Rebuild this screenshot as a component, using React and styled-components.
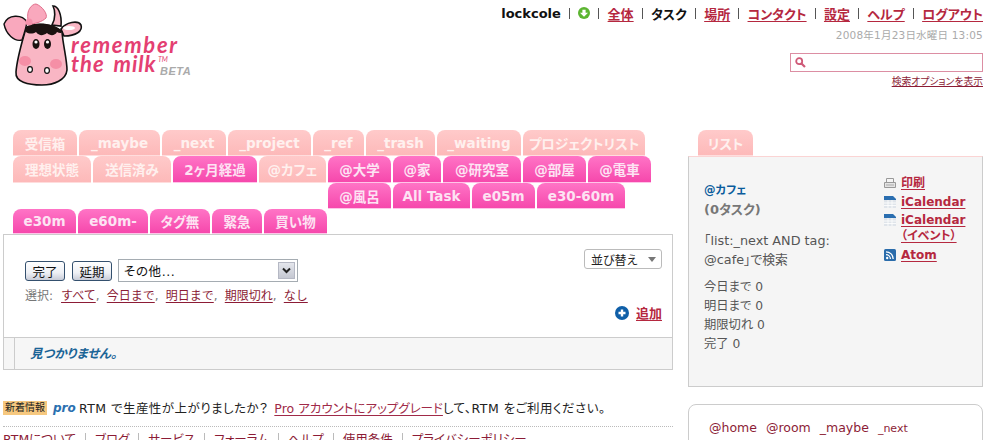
import React from 'react';
import styled, { createGlobalStyle } from 'styled-components';

const GlobalStyle = createGlobalStyle`
  html, body { margin: 0; padding: 0; background: #fff; overflow: hidden; }
  body {
    font-family: "DejaVu Sans", "Noto Sans CJK JP", sans-serif;
    font-feature-settings: "palt";
  }
`;

const Page = styled.div`
  width: 985px;
  height: 440px;
  overflow: hidden;
`;

const Header = styled.header`
  display: flex;
  justify-content: space-between;
  height: 130px;
`;

const RightHead = styled.div`
  display: flex;
  flex-direction: column;
  align-items: flex-end;
  padding: 5px 2px 0 0;
`;

const NavBar = styled.nav`
  display: flex;
  align-items: center;
  height: 16px;
  font-size: 13px;
  font-weight: bold;
  color: #111;
`;

const NavLink = styled.a`
  color: #b5283f;
  text-decoration: underline;
  text-underline-offset: 2px;
`;

const NavSep = styled.span`
  width: 1px;
  height: 11px;
  background: #555;
  margin: 0 8.2px;
`;

const DateText = styled.div`
  margin-top: 7px;
  font-size: 10.5px;
  line-height: 14px;
  color: #aaa;
  letter-spacing: 0.2px;
`;

const SearchBox = styled.div`
  display: flex;
  align-items: center;
  box-sizing: content-box;
  width: 187px;
  height: 17px;
  margin-top: 11px;
  padding-left: 4px;
  border: 1px solid #dc8ea3;
`;

const SearchOption = styled.a`
  margin-top: 3px;
  font-size: 9.8px;
  line-height: 14px;
  color: #8c1c36;
  text-decoration: underline;
`;

const Columns = styled.div`
  display: flex;
  align-items: flex-start;
  padding-left: 3px;
`;

const MainColumn = styled.main`
  width: 670px;
`;

const TabRow = styled.div`
  display: flex;
  gap: 2px;
  height: ${(p) => p.$h || 26}px;
  padding-left: ${(p) => p.$indent || 10}px;
`;

const Tab = styled.div`
  display: flex;
  align-items: center;
  justify-content: center;
  box-sizing: border-box;
  width: ${(p) => p.$w}px;
  height: 100%;
  font-size: 13.5px;
  font-weight: bold;
  white-space: nowrap;
  border-radius: 8px 8px 0 0;
  color: ${(p) => (p.$pink ? '#fde3f3' : '#fff0ee')};
  background: ${(p) =>
    p.$pink
      ? 'linear-gradient(#ff74c6, #f648ac)'
      : 'linear-gradient(#ffcaca, #fdb9b9)'};
  border-bottom: 1px solid ${(p) => (p.$pink ? '#ffc4e8' : '#fdd')};
`;

const Panel = styled.section`
  display: flex;
  flex-direction: column;
  height: 134px;
  border: 1px solid #ccc;
`;

const PanelTop = styled.div`
  display: flex;
  flex: 1;
  justify-content: space-between;
  padding: 14px 10px 0 21px;
`;

const Controls = styled.div`
  padding-top: 10px;
`;

const ControlRow = styled.div`
  display: flex;
  align-items: center;
  gap: 6px;
`;

const ActionButton = styled.button`
  box-sizing: border-box;
  width: 40px;
  height: 20px;
  margin-right: ${(p) => p.$gap || 0}px;
  padding: 0;
  font: 12.5px "Noto Sans CJK JP", sans-serif;
  color: #111;
  border: 1px solid #34506e;
  border-radius: 3px;
  background: linear-gradient(#fff, #eef0f5 60%, #c8ccd8);
`;

const SelectBox = styled.div`
  display: flex;
  align-items: center;
  justify-content: space-between;
  box-sizing: border-box;
  width: 180px;
  height: 23px;
  padding: 0 2px 0 5px;
  font-size: 12.5px;
  letter-spacing: 0.6px;
  color: #111;
  border: 1px solid #a5acb2;
`;

const SelectArrow = styled.span`
  display: flex;
  align-items: center;
  justify-content: center;
  width: 17px;
  height: 17px;
  background: linear-gradient(#e4e6ec, #c5c8d2);
  border: 1px solid #b5b8c4;
  box-sizing: border-box;
`;

const SelectRow = styled.div`
  display: flex;
  margin-top: 6px;
  font-size: 12px;
  line-height: 17px;
  font-feature-settings: normal;
  color: #777;
`;

const RowLink = styled.a`
  margin-left: ${(p) => (p.$first ? '8px' : '0')};
  color: #8c1c36;
  text-decoration: underline;
  text-underline-offset: 2px;
`;

const Comma = styled.span`
  margin-right: 7px;
  width: 4px;
`;

const PanelSide = styled.div`
  display: flex;
  flex-direction: column;
  align-items: flex-end;
`;

const SortButton = styled.div`
  display: flex;
  align-items: center;
  justify-content: space-between;
  box-sizing: border-box;
  width: 78px;
  height: 20px;
  padding: 0 5px 0 6px;
  font-size: 12px;
  color: #222;
  border: 1px solid #bbb;
  border-radius: 3px;
`;

const SortArrow = styled.span`
  width: 0;
  height: 0;
  border-left: 4.5px solid transparent;
  border-right: 4.5px solid transparent;
  border-top: 5px solid #777;
`;

const AddLink = styled.div`
  display: flex;
  align-items: center;
  gap: 7px;
  margin-top: 34px;
  font-size: 13px;
  font-weight: bold;
`;

const NotFound = styled.div`
  height: 31px;
  border-top: 1px solid #ccc;
  background: #f6f6f6;
  padding-left: 10px;
`;

const NotFoundInner = styled.div`
  height: 100%;
  padding-left: 15px;
  border-left: 1px solid #ccc;
  font-size: 12.5px;
  line-height: 31px;
  font-weight: bold;
  font-style: italic;
  color: #1a6496;
`;

const NewsRow = styled.div`
  display: flex;
  align-items: center;
  box-sizing: border-box;
  height: 30px;
  margin-top: 27px;
  padding-bottom: 8px;
  font-size: 12.5px;
  letter-spacing: 0.45px;
  color: #222;
  border-bottom: 1px dotted #bbb;
`;

const NewsBadge = styled.span`
  width: 44px;
  height: 14px;
  font-size: 10px;
  line-height: 14px;
  letter-spacing: 0;
  text-align: center;
  color: #222;
  background: #f6c87f;
`;

const ProMark = styled.span`
  width: 20px;
  margin: 0 6px;
  font-size: 12px;
  font-weight: bold;
  font-style: italic;
  letter-spacing: 0;
  color: #2a70b0;
`;

const NewsLink = styled.a`
  color: #a02a48;
  letter-spacing: 0;
  text-decoration: underline;
  text-underline-offset: 2px;
  margin-left: 6px;
`;

const FootLinks = styled.div`
  display: flex;
  align-items: center;
  height: 16px;
  margin-top: 3px;
  font-size: 12.5px;
  white-space: nowrap;
  color: #8c1c36;
`;

const FootSep = styled.span`
  width: 1px;
  height: 11px;
  margin: 0 9px;
  background: #bbb;
`;

const Sidebar = styled.aside`
  width: 295px;
  margin-left: 15px;
`;

const SideTabRow = styled.div`
  display: flex;
  height: 26px;
  padding-left: 10px;
`;

const SideBox = styled.section`
  display: flex;
  justify-content: space-between;
  box-sizing: border-box;
  height: 231px;
  padding: 25px 17px 0 15px;
  background: #f5f5f5;
  border: 1px solid #ccc;
  border-top-color: #fbd4d4;
`;

const ListName = styled.div`
  font-size: 11.5px;
  line-height: 16px;
  font-weight: bold;
  color: #0a5c9c;
`;

const TaskCount = styled.div`
  margin-top: 4px;
  font-size: 13px;
  line-height: 16px;
  font-weight: bold;
  color: #777;
`;

const Query = styled.div`
  margin-top: 13px;
  font-size: 12.8px;
  line-height: 19px;
  color: #555;
`;

const Stats = styled.div`
  margin-top: 9px;
  font-size: 12.3px;
  line-height: 19px;
  color: #555;
`;

const SideLinks = styled.ul`
  list-style: none;
  margin: -7px 0 0;
  padding: 0;
  width: 81px;
`;

const SideLinkItem = styled.li`
  display: flex;
  gap: 5px;
  margin-bottom: 2.5px;
  font-size: 12px;
  line-height: 16px;
  font-weight: bold;
`;

const IconCell = styled.span`
  display: flex;
  align-items: center;
  flex: none;
  width: 12px;
  height: 16px;
`;

const SideLink = styled.a`
  color: #b5283f;
  text-decoration: underline;
  text-underline-offset: 2px;
`;

const TagBox = styled.section`
  display: flex;
  gap: 9px;
  align-items: baseline;
  box-sizing: border-box;
  height: 80px;
  margin-top: 17px;
  padding: 15px 20px;
  font-size: 12.5px;
  color: #8c1c36;
  border: 1px solid #ccc;
  border-radius: 8px;
`;

const SmallTag = styled.span`
  font-size: 11px;
`;

const paleRow = [
  ['受信箱', 64], ['_maybe', 81], ['_next', 64], ['_project', 83], ['_ref', 51], ['_trash', 69], ['_waiting', 84], ['プロジェクトリスト', 122],
];
const row2 = [
  ['理想状態', 78], ['送信済み', 78], ['2ヶ月経過', 84, true], ['@カフェ', 67], ['@大学', 63, true], ['@家', 48, true], ['@研究室', 78, true], ['@部屋', 63, true], ['@電車', 63, true],
];
const row3 = [['@風呂', 63], ['All Task', 77], ['e05m', 63], ['e30-60m', 88]];
const row4 = [['e30m', 63], ['e60m-', 70], ['タグ無', 60], ['緊急', 50], ['買い物', 63]];
const navItems = ['全体', 'タスク', '場所', 'コンタクト', '設定', 'ヘルプ', 'ログアウト'];
const footItems = ['RTMについて', 'ブログ', 'サービス', 'フォーラム', 'ヘルプ', '使用条件', 'プライバシーポリシー'];

function Logo() {
  return (
    <svg width="200" height="92" viewBox="0 0 200 92">
      {/* horn and ear */}
      <path d="M52 25 C56 18 55 10 53 6 C58 6 62 14 61 26Z" fill="#f9b6c4" stroke="#111" strokeWidth="1.6" />
      <path d="M61 29 C66 22 78 20 81 25 C83 31 76 36 64 36Z" fill="#f9b6c4" stroke="#111" strokeWidth="1.6" />
      <ellipse cx="69" cy="28" rx="6" ry="2" fill="#fff" />
      {/* head */}
      <path d="M26 28 C36 22 54 24 62 32 C63 45 67 60 67 70 C66 80 54 85 42 85 C28 85 15 82 16 72 C17 58 22 42 26 28Z" fill="#f9b6c4" stroke="#111" strokeWidth="1.6" />
      <path d="M25 27 C36 21 54 23 62 31 C62 34 59 33 57 32 C55 36 50 36 47 33 C43 36 39 36 36 32 C33 34 29 34 26 32Z" fill="#1a1210" />
      {/* cheeks */}
      <ellipse cx="25" cy="61" rx="6" ry="5" fill="#f58fa6" />
      <ellipse cx="56" cy="64" rx="6" ry="5" fill="#f58fa6" />
      {/* eyes */}
      <ellipse cx="36" cy="44" rx="3.5" ry="5" fill="#1a1210" />
      <ellipse cx="47.5" cy="44" rx="3.5" ry="5" fill="#1a1210" />
      <circle cx="36" cy="42" r="1.6" fill="#fff" />
      <circle cx="47.5" cy="42" r="1.6" fill="#fff" />
      {/* nostrils */}
      <ellipse cx="30" cy="69.5" rx="2.4" ry="2.8" fill="#fff" stroke="#111" strokeWidth="1.2" />
      <ellipse cx="47" cy="70.5" rx="2.4" ry="2.8" fill="#fff" stroke="#111" strokeWidth="1.2" />
      {/* bow */}
      <path d="M27 22 C22 14 8 14 4 24 C6 34 14 42 22 40 C24 34 26 28 27 22Z" fill="#f9a8bd" stroke="#111" strokeWidth="1.4" />
      <path d="M28 20 C26 10 32 4 36 4 C42 6 48 14 46 18 C42 22 34 24 30 24Z" fill="#f9a8bd" stroke="#e0708c" strokeWidth="1" />
      <circle cx="29" cy="22" r="3.5" fill="#f490aa" />
      {/* wordmark */}
      <text x="71" y="53" fill="#e43f72" fontFamily="Lato, sans-serif" fontSize="22" fontWeight="bold" fontStyle="italic" letterSpacing="1.7">remember</text>
      <text x="71" y="72" fill="#e43f72" fontFamily="Lato, sans-serif" fontSize="22" fontWeight="bold" fontStyle="italic" letterSpacing="1" wordSpacing="3">the milk</text>
      <text x="158" y="62" fill="#e43f72" fontFamily="Lato, sans-serif" fontSize="7" fontStyle="italic">TM</text>
      <text x="160" y="75" fill="#aaa" fontFamily="'Liberation Sans', sans-serif" fontSize="11" fontWeight="bold" fontStyle="italic" letterSpacing="0.5">BETA</text>
    </svg>
  );
}

const DownIcon = () => (
  <svg width="12" height="12" viewBox="0 0 12 12">
    <circle cx="6" cy="6" r="6" fill="#5cb531" />
    <path d="M4.4 2.8h3.2v3H10L6 9.8 2 5.8h2.4z" fill="#fff" />
  </svg>
);

const MagnifierIcon = () => (
  <svg width="11" height="11" viewBox="0 0 11 11">
    <circle cx="4.2" cy="4.2" r="3" fill="none" stroke="#cf5a78" strokeWidth="1.8" />
    <path d="M6.5 6.5 10 10" stroke="#cf5a78" strokeWidth="2.2" />
  </svg>
);

const PlusIcon = () => (
  <svg width="14" height="14" viewBox="0 0 14 14">
    <circle cx="7" cy="7" r="7" fill="#0f5fa8" />
    <path d="M3.5 7h7M7 3.5v7" stroke="#fff" strokeWidth="2.4" />
  </svg>
);

const PrintIcon = () => (
  <svg width="12" height="12" viewBox="0 0 12 12">
    <path d="M2.5 1.5h7v4h-7z" fill="#f5f5f5" stroke="#999" />
    <path d="M.5 5.5h11v5h-11z" fill="#e4e4e4" stroke="#999" />
    <path d="M2 8h8" stroke="#aaa" />
  </svg>
);

const CalendarIcon = () => (
  <svg width="12" height="12" viewBox="0 0 12 12">
    <path d="M0 0h9l3 3v9H0z" fill="#dfe4ea" />
    <path d="M0 0h9l3 3v1H0z" fill="#2a6eb0" />
    <path d="M0 7h12M0 9.5h12M4 4v8M8 4v8" stroke="#fff" strokeWidth="0.8" />
  </svg>
);

const FeedIcon = () => (
  <svg width="12" height="12" viewBox="0 0 12 12">
    <rect width="12" height="12" rx="1.5" fill="#2a6cab" />
    <circle cx="3.2" cy="9" r="1.2" fill="#fff" />
    <path d="M2 5.6A4.4 4.4 0 0 1 6.4 10M2 2.8A7.2 7.2 0 0 1 9.2 10" fill="none" stroke="#fff" strokeWidth="1.3" />
  </svg>
);

const tabsOf = (items, pink) =>
  items.map(([label, width, itemPink]) => (
    <Tab key={label} $w={width} $pink={pink || itemPink}>{label}</Tab>
  ));

export default function App() {
  return (
    <Page>
      <GlobalStyle />
      <Header>
        <Logo />
        <RightHead>
          <NavBar>
            <span>lockcole</span>
            <NavSep />
            <DownIcon />
            {navItems.map((item) => (
              <React.Fragment key={item}>
                <NavSep />
                {item === 'タスク' ? <span>{item}</span> : <NavLink>{item}</NavLink>}
              </React.Fragment>
            ))}
          </NavBar>
          <DateText>2008年1月23日水曜日 13:05</DateText>
          <SearchBox><MagnifierIcon /></SearchBox>
          <SearchOption>検索オプションを表示</SearchOption>
        </RightHead>
      </Header>
      <Columns>
        <MainColumn>
          <TabRow>{tabsOf(paleRow)}</TabRow>
          <TabRow $h={27}>{tabsOf(row2)}</TabRow>
          <TabRow $indent={325}>{tabsOf(row3, true)}</TabRow>
          <TabRow $h={25}>{tabsOf(row4, true)}</TabRow>
          <Panel>
            <PanelTop>
              <Controls>
                <ControlRow>
                  <ActionButton $gap={1}>完了</ActionButton>
                  <ActionButton>延期</ActionButton>
                  <SelectBox>
                    その他...
                    <SelectArrow>
                      <svg width="9" height="7" viewBox="0 0 9 7">
                        <path d="M1 1.5 4.5 5 8 1.5" fill="none" stroke="#222" strokeWidth="2" />
                      </svg>
                    </SelectArrow>
                  </SelectBox>
                </ControlRow>
                <SelectRow>
                  選択:
                  <RowLink $first>すべて</RowLink><Comma>,</Comma>
                  <RowLink>今日まで</RowLink><Comma>,</Comma>
                  <RowLink>明日まで</RowLink><Comma>,</Comma>
                  <RowLink>期限切れ</RowLink><Comma>,</Comma>
                  <RowLink>なし</RowLink>
                </SelectRow>
              </Controls>
              <PanelSide>
                <SortButton>並び替え<SortArrow /></SortButton>
                <AddLink><PlusIcon /><NavLink>追加</NavLink></AddLink>
              </PanelSide>
            </PanelTop>
            <NotFound><NotFoundInner>見つかりません。</NotFoundInner></NotFound>
          </Panel>
          <NewsRow>
            <NewsBadge>新着情報</NewsBadge>
            <ProMark>pro</ProMark>
            RTM で生産性が上がりましたか？
            <NewsLink>Pro アカウントにアップグレード</NewsLink>
            して、RTM をご利用ください。
          </NewsRow>
          <FootLinks>
            {footItems.map((item, i) => (
              <React.Fragment key={item}>
                {i > 0 && <FootSep />}
                <span>{item}</span>
              </React.Fragment>
            ))}
          </FootLinks>
        </MainColumn>
        <Sidebar>
          <SideTabRow><Tab $w={55}>リスト</Tab></SideTabRow>
          <SideBox>
            <div>
              <ListName>@カフェ</ListName>
              <TaskCount>(0タスク)</TaskCount>
              <Query>「list:_next AND tag:<br />@cafe」で検索</Query>
              <Stats>
                今日まで 0<br />
                明日まで 0<br />
                期限切れ 0<br />
                完了 0
              </Stats>
            </div>
            <SideLinks>
              <SideLinkItem><IconCell><PrintIcon /></IconCell><SideLink>印刷</SideLink></SideLinkItem>
              <SideLinkItem><IconCell><CalendarIcon /></IconCell><SideLink>iCalendar</SideLink></SideLinkItem>
              <SideLinkItem><IconCell><CalendarIcon /></IconCell><SideLink>iCalendar （イベント）</SideLink></SideLinkItem>
              <SideLinkItem><IconCell><FeedIcon /></IconCell><SideLink>Atom</SideLink></SideLinkItem>
            </SideLinks>
          </SideBox>
          <TagBox>
            <span>@home</span>
            <span>@room</span>
            <span>_maybe</span>
            <SmallTag>_next</SmallTag>
          </TagBox>
        </Sidebar>
      </Columns>
    </Page>
  );
}
